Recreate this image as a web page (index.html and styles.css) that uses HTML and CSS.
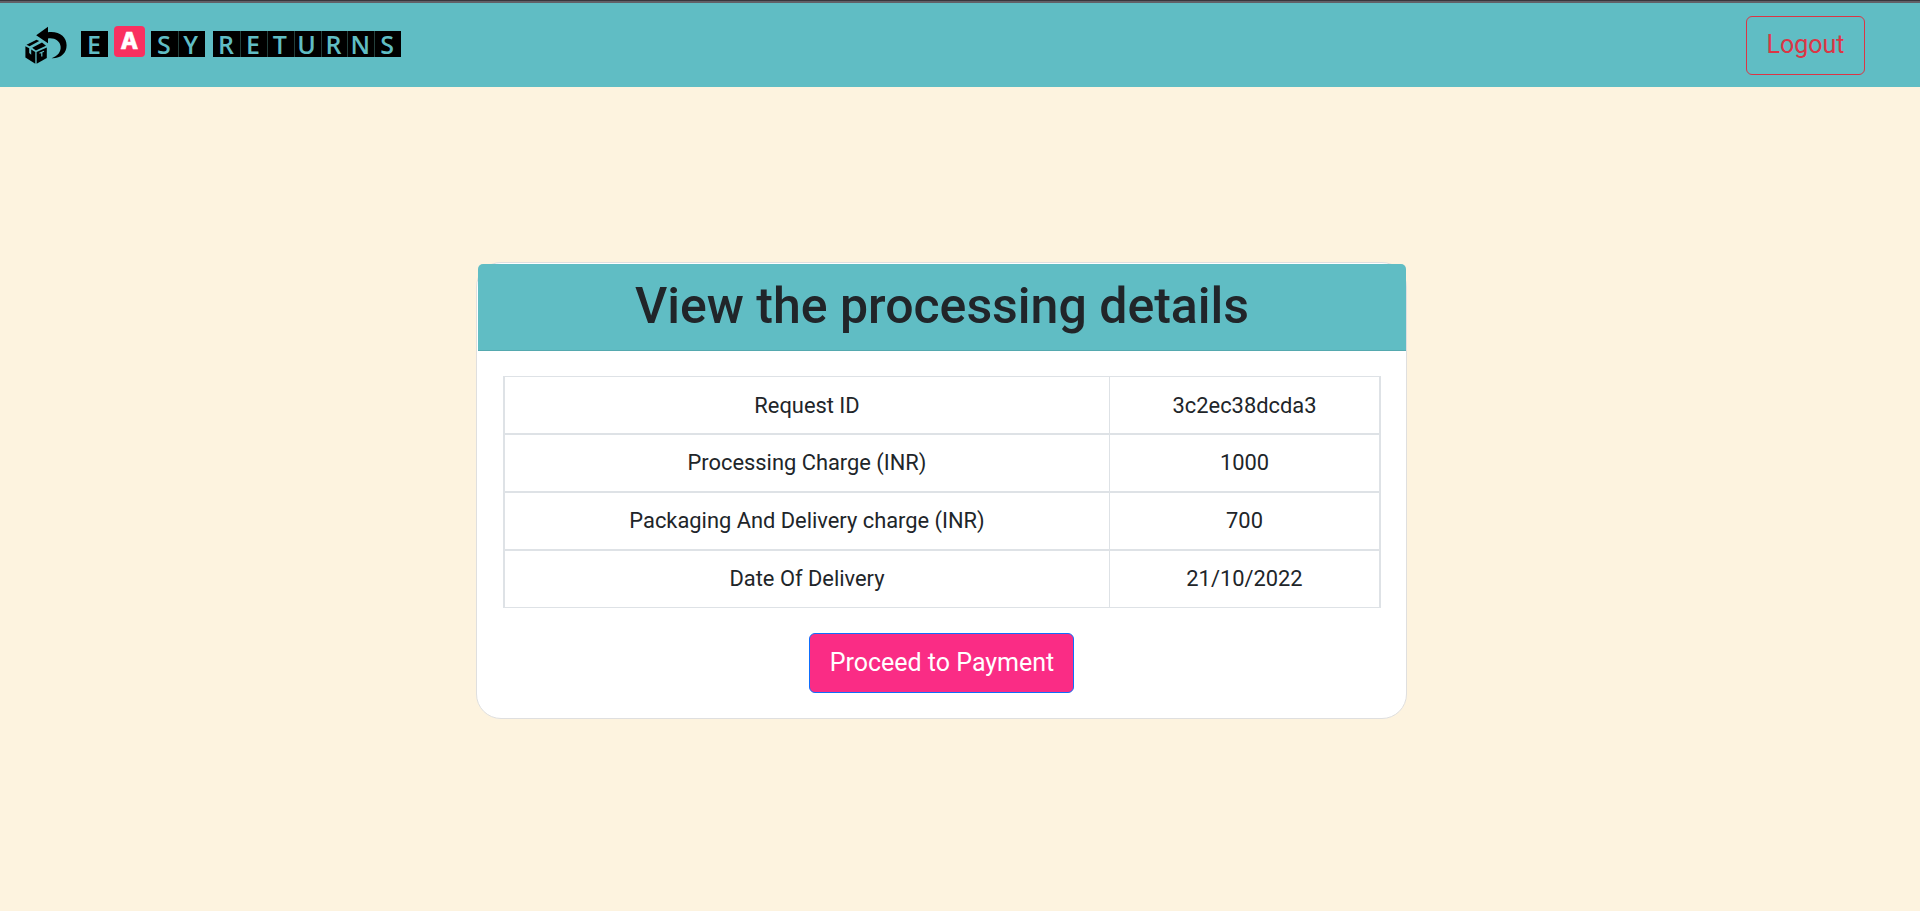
FILE: index.html
```html
<!DOCTYPE html>
<html lang="en">
<head>
<meta charset="utf-8">
<title>Easy Returns</title>
<link rel="stylesheet" href="styles.css">
</head>
<body>
<header class="navbar">
  <a class="brand">
    <svg class="brand-icon" viewBox="0 0 60 60" width="60" height="60">
      <path d="M21.2 20.2 33 11.8V17.2C44.500 15.800 51.600 22 51.600 30.200C51.600 38 46 43.500 36.600 43.200C42.500 41.500 46.200 37 45.600 31.600C45 25.800 39.500 22.600 33 23.500V28.300Z"/>
      <path d="M10.400 31.200 14.200 33.300V38L16.200 39.700V34.600L20.300 37V48.700L10.400 42.400Z"/>
      <path d="M21.600 37 31.800 32.500V43L21.600 48.700Z"/>
      <path d="M11.500 29.800 21.500 24.700 24.200 26 14.600 31.300ZM17.200 32.800 27 27.500 31 30.800 20.900 35.400Z"/>
      <path class="brand-mark" d="M24.500 38.200 29 36.200M26.800 37.500V41.500"/>
    </svg>
    <span class="word"><span class="tile">E</span></span>
    <span class="tile tile-red">A</span>
    <span class="word"><span class="tile">S</span><span class="tile">Y</span></span>
    <span class="word word-last"><span class="tile">R</span><span class="tile">E</span><span class="tile">T</span><span class="tile">U</span><span class="tile">R</span><span class="tile">N</span><span class="tile">S</span></span>
  </a>
  <button class="btn btn-logout">Logout</button>
</header>
<main class="page">
  <section class="card">
    <h1 class="card-header">View the processing details</h1>
    <div class="card-body">
      <div class="details">
        <div class="row"><div class="cell">Request ID</div><div class="cell">3c2ec38dcda3</div></div>
        <div class="row"><div class="cell">Processing Charge (INR)</div><div class="cell">1000</div></div>
        <div class="row"><div class="cell">Packaging And Delivery charge (INR)</div><div class="cell">700</div></div>
        <div class="row"><div class="cell">Date Of Delivery</div><div class="cell">21/10/2022</div></div>
      </div>
      <button class="btn btn-pay">Proceed to Payment</button>
    </div>
  </section>
</main>
</body>
</html>
```
FILE: styles.css
```css
* { box-sizing: border-box; }
body {
  margin: 0;
  min-height: 911px;
  background: #fdf3df;
  color: #212529;
  font-family: Roboto, sans-serif;
}
.navbar {
  display: flex;
  justify-content: space-between;
  align-items: flex-start;
  height: 87px;
  padding: 0 55px 0 15px;
  border-top: 3px solid #626067;
  background: #60bdc4;
}
.navbar::before {
  content: "";
  position: absolute;
  top: 0;
  left: 0;
  width: 100%;
  height: 1px;
  background: #38373d;
}
.brand { display: flex; align-items: flex-start; padding-top: 12px; }
.brand-icon { display: block; margin-right: 6px; fill: #000; }
.brand-mark { fill: none; stroke: #60bdc4; stroke-width: 1.200; }
.word { display: flex; margin-top: 16px; }
.word-last { margin-left: 8.500px; }
.tile {
  display: block;
  width: 26.860px;
  height: 26px;
  background: #000;
  color: #60bdc4;
  font: 600 25px/26px "Open Sans", sans-serif;
  text-align: center;
  text-indent: -1px;
}
.tile + .tile { box-shadow: inset 1px 0 #233f3c; }
.tile-red {
  width: 31px;
  height: 31px;
  margin: 11px 6px 0;
  border-radius: 4px;
  background: #fa3060;
  color: #fff;
  font: 800 23px/31px Inter, sans-serif;
  text-indent: 0;
  -webkit-text-stroke: 0.500px #fff;
}
.btn {
  display: block;
  border-radius: 6px;
  font: 400 25px/37.500px Roboto, sans-serif;
  text-align: center;
  white-space: nowrap;
}
.btn-logout {
  width: 119px;
  height: 59px;
  margin-top: 13px;
  padding: 8px 0 10px;
  border: 1px solid #dc3545;
  background: transparent;
  color: #dc3545;
}
.page { display: flex; padding: 175px 0 0 476px; }
.card {
  width: 931px;
  height: 457px;
  padding: 1px 0 0 1px;
  border: 1px solid #dfdfdf;
  border-radius: 25px;
  background: #fff;
}
.card-header {
  height: 87px;
  margin: 0;
  border-bottom: 1px solid #55a9af;
  border-radius: 5px 5px 0 0;
  background: #60bdc4;
  font-size: 50px;
  font-weight: 500;
  line-height: 84px;
  text-align: center;
}
.card-body { padding: 25px 25px 0; }
.details {
  border: 1px solid #dee2e6;
  border-width: 1px 2px;
}
.row { display: grid; grid-template-columns: 604px 1fr; height: 58px; }
.row + .row { border-top: 2px solid #dee2e6; }
.row:first-child { height: 56px; }
.cell { font-size: 21.875px; line-height: 55px; text-align: center; }
.row:first-child .cell { line-height: 57px; height: 56px; }
.cell + .cell { border-left: 1px solid #dee2e6; }
.btn-pay {
  width: 265px;
  height: 60px;
  margin: 25px 0 0 306px;
  padding: 10px 0 10px 1px;
  border: 1px solid #0d6efd;
  background: #fa2c85;
  color: #fff;
}
```
